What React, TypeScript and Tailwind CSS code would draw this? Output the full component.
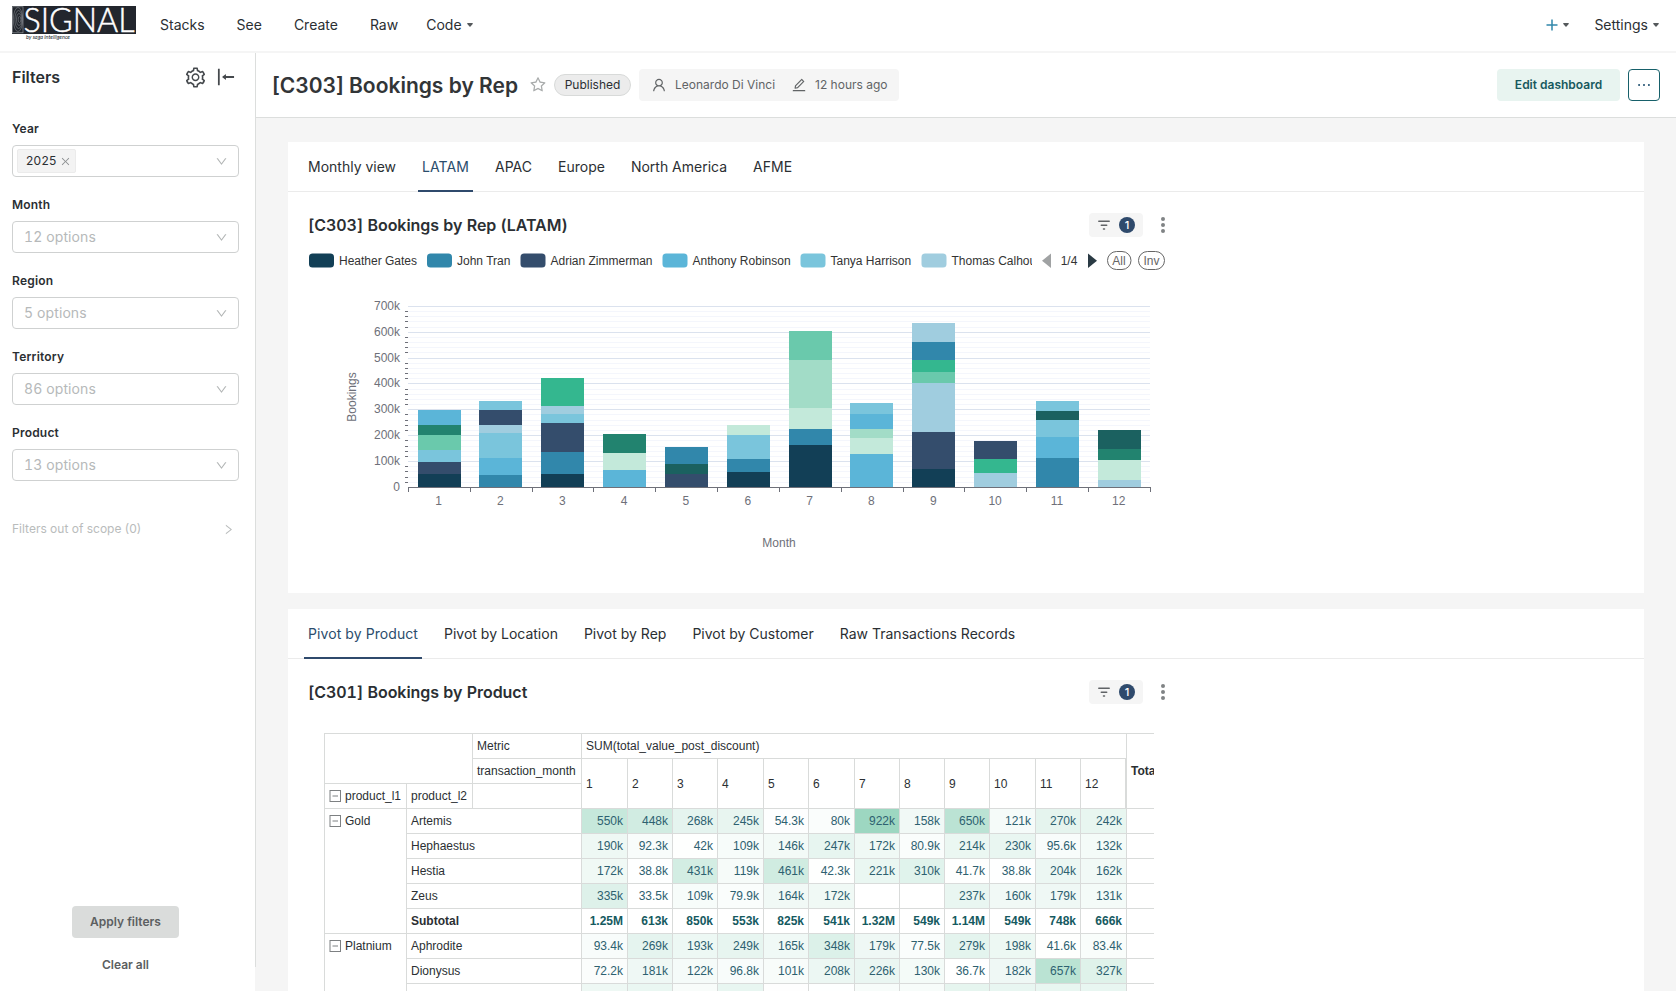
import {
  AiOutlineClose,
  AiOutlineDown,
  AiOutlineEdit,
  AiOutlineEllipsis,
  AiOutlineRight,
  AiOutlineSetting,
  AiOutlineStar,
  AiOutlineUser,
  AiOutlineVerticalAlignTop,
} from "react-icons/ai";

const NAVY = "#123f56";
const TEAL = "#3187ab";
const INDIGO = "#344d6c";
const SKY = "#5bb5d8";
const AQUA = "#7ac5dc";
const ICE = "#a0cddf";
const PINE = "#1b6160";
const FOREST = "#22836f";
const GREEN = "#34b78f";
const JADE = "#6ac9ac";
const MINT = "#a2dcc7";
const PALE = "#c3e9da";

type Segment = [string, number];

// one stack per month, bottom segment first, values in thousands
const stacks: Segment[][] = [
  [[NAVY, 52], [INDIGO, 47], [AQUA, 48], [JADE, 58], [FOREST, 39], [SKY, 58]],
  [[TEAL, 50], [SKY, 66], [AQUA, 95], [ICE, 33], [INDIGO, 56], [AQUA, 34]],
  [[NAVY, 54], [TEAL, 84], [INDIGO, 113], [AQUA, 35], [ICE, 31], [GREEN, 108]],
  [[SKY, 67], [PALE, 68], [FOREST, 71]],
  [[INDIGO, 54], [PINE, 37], [TEAL, 67]],
  [[NAVY, 61], [TEAL, 49], [AQUA, 95], [PALE, 39]],
  [[NAVY, 164], [TEAL, 62], [PALE, 82], [MINT, 184], [JADE, 112]],
  [[SKY, 131], [PALE, 63], [MINT, 34], [SKY, 58], [AQUA, 40]],
  [[NAVY, 71], [INDIGO, 146], [ICE, 186], [JADE, 43], [GREEN, 49], [TEAL, 67], [ICE, 73]],
  [[ICE, 58], [GREEN, 53], [INDIGO, 71]],
  [[TEAL, 115], [SKY, 81], [AQUA, 64], [PINE, 37], [AQUA, 39]],
  [[ICE, 30], [PALE, 77], [FOREST, 44], [PINE, 71]],
];

const legend = [
  { name: "Heather Gates", color: NAVY, x: 309 },
  { name: "John Tran", color: TEAL, x: 427 },
  { name: "Adrian Zimmerman", color: INDIGO, x: 520.5 },
  { name: "Anthony Robinson", color: SKY, x: 662.5 },
  { name: "Tanya Harrison", color: AQUA, x: 800.5 },
  { name: "Thomas Calhoun", color: ICE, x: 921.5 },
];

interface PivotRow {
  name: string;
  values: (number | null)[];
  subtotal?: boolean;
  hideText?: boolean;
}

const pivotRows: PivotRow[] = [
  { name: "Artemis", values: [550, 448, 268, 245, 54.3, 80, 922, 158, 650, 121, 270, 242] },
  { name: "Hephaestus", values: [190, 92.3, 42, 109, 146, 247, 172, 80.9, 214, 230, 95.6, 132] },
  { name: "Hestia", values: [172, 38.8, 431, 119, 461, 42.3, 221, 310, 41.7, 38.8, 204, 162] },
  { name: "Zeus", values: [335, 33.5, 109, 79.9, 164, 172, null, null, 237, 160, 179, 131] },
  { name: "Subtotal", values: [1250, 613, 850, 553, 825, 541, 1320, 549, 1140, 549, 748, 666], subtotal: true },
  { name: "Aphrodite", values: [93.4, 269, 193, 249, 165, 348, 179, 77.5, 279, 198, 41.6, 83.4] },
  { name: "Dionysus", values: [72.2, 181, 122, 96.8, 101, 208, 226, 130, 36.7, 182, 657, 327] },
  { name: "", values: [190, 220, 100, 240, 45, 40, 110, 110, 260, 240, 240, 240], hideText: true },
];

const formatValue = (v: number) => (v >= 1000 ? `${v / 1000}M` : `${v}k`);

// heat colour, white at the smallest value and green at the largest
const heat = (v: number) => {
  const t = Math.max(0, (v - 33) / 889);
  return `rgb(${Math.round(255 - 98 * t)}, ${Math.round(255 - 40 * t)}, ${Math.round(255 - 62 * t)})`;
};

function Caret() {
  return (
    <svg width="6" height="4" viewBox="0 0 6 4" className="shrink-0">
      <path d="M0.8 0h4.4c.6 0 .9.6.5 1L3.500 3.600a.7.7 0 0 1-1 0L.3 1C-.1.600.2 0 .8 0z" fill="#55595c" />
    </svg>
  );
}

function Logo() {
  return (
    <svg width="125" height="36" viewBox="0 0 125 36" className="shrink-0">
      <rect width="124" height="28" fill="#22262d" />
      <rect x="0.500" y="0.800" width="10.500" height="26" fill="none" stroke="#8d9196" strokeWidth="0.700" />
      <g fill="none" stroke="#8d9196" strokeWidth="0.500">
        <ellipse cx="6" cy="13.500" rx="4.700" ry="12" />
        <ellipse cx="6.500" cy="13.500" rx="3.600" ry="9" />
        <ellipse cx="7" cy="13.500" rx="2.500" ry="6" />
        <ellipse cx="7.500" cy="13.500" rx="1.300" ry="3" />
      </g>
      <text
        x="11.500"
        y="26"
        fontFamily="Lato, sans-serif"
        fontSize="33.500"
        fontWeight="300"
        textLength="111"
        lengthAdjust="spacingAndGlyphs"
        fill="#ffffff"
        stroke="#ffffff"
        strokeWidth="0.500"
      >
        SIGNAL
      </text>
      <text x="14" y="32.500" fontFamily="Lato, sans-serif" fontSize="5.500" fontStyle="italic" textLength="44" fill="#22262d">by saga intelligence</text>
    </svg>
  );
}

function TopBar() {
  return (
    <div className="flex h-[53px] items-center border-b-2 border-[#f5f5f5] bg-white pb-0.5 pl-3 text-sm text-[#2b2f33]">
      <div className="-mt-0.5"><Logo /></div>
      <div className="ml-[23px] flex items-center gap-8">
        <span>Stacks</span>
        <span>See</span>
        <span>Create</span>
        <span>Raw</span>
        <span className="flex items-center gap-[5px] -ml-1">Code <Caret /></span>
      </div>
      <div className="ml-auto flex items-center pr-[17px]">
        <svg width="12" height="12" viewBox="0 0 12 12" className="mr-[5px]">
          <path d="M6 0.500v11M0.500 6h11" stroke="#3187ab" strokeWidth="1.500" />
        </svg>
        <Caret />
        <span className="ml-[25px] mr-[5px]">Settings</span>
        <Caret />
      </div>
    </div>
  );
}

const filters = [
  { label: "Year", value: "2025" },
  { label: "Month", placeholder: "12 options" },
  { label: "Region", placeholder: "5 options" },
  { label: "Territory", placeholder: "86 options" },
  { label: "Product", placeholder: "13 options" },
];

function Sidebar() {
  return (
    <div className="-mr-px flex h-[914px] w-64 shrink-0 flex-col border-r border-[#dcdedd] bg-white pl-3 pr-4">
      <div className="flex h-12 items-center">
        <span className="text-base font-semibold text-[#2b2f33]">Filters</span>
        <AiOutlineSetting className="ml-auto h-[23px] w-[23px] text-[#45494d]" />
        <AiOutlineVerticalAlignTop className="ml-[7px] mr-px h-6 w-6 -rotate-90 text-[#45494d]" />
      </div>

      <div className="mt-[18px] flex flex-col gap-[18px]">
        {filters.map((f) => (
          <div key={f.label}>
            <div className="flex h-5 items-center text-xs font-semibold tracking-[0.2px] text-[#2b2f33]">{f.label}</div>
            <div className="mt-1.5 flex h-8 w-[227px] items-center rounded border border-[#cfd1d1] pl-1 pr-[10px]">
              {f.value ? (
                <span className="flex h-6 items-center gap-[3px] rounded-xs border border-[#ebebeb] bg-[#f3f3f3] pl-2 pr-1 text-xs tracking-[0.3px] text-[#2b2f33]">
                  {f.value}
                  <AiOutlineClose className="h-[11px] w-[11px] text-[#8c8f91]" />
                </span>
              ) : (
                <span className="pl-[7px] text-sm tabular-nums tracking-[0.1px] text-[#b6b9ba]">{f.placeholder}</span>
              )}
              <AiOutlineDown className="ml-auto mt-px h-[13px] w-[13px] text-[#b2b5b5]" />
            </div>
          </div>
        ))}
      </div>

      <div className="mt-[38px] flex h-5 items-center text-xs text-[#b9bcbc]">
        <span>Filters out of scope (0)</span>
        <AiOutlineRight className="ml-auto mr-1 h-[13px] w-[13px]" />
      </div>

      <div className="mb-[-8px] mt-auto flex flex-col items-center gap-[17px] text-xs font-semibold text-[#5c5f61]">
        <button className="h-8 w-[107px] rounded bg-[#dadcdb]">Apply filters</button>
        <button className="h-5">Clear all</button>
      </div>
    </div>
  );
}

function DashboardHeader() {
  return (
    <div className="flex h-[65px] items-center border-b border-[#dcdedd] bg-white pl-4 pr-4">
      <h1 className="mt-px text-[21px] font-semibold text-[#323537]">[C303] Bookings by Rep</h1>
      <AiOutlineStar className="ml-[11px] h-[18px] w-[18px] text-[#a9acac]" />
      <span className="ml-[7px] flex h-[22px] w-[77px] items-center justify-center rounded-full border border-[#d8dad9] bg-[#ececec] text-xs text-[#2b2f33]">
        Published
      </span>
      <div className="ml-2 flex h-8 w-[260px] items-center rounded bg-[#f5f5f5] pl-3 text-xs text-[#616466]">
        <AiOutlineUser className="h-4 w-4" />
        <span className="ml-2">Leonardo Di Vinci</span>
        <AiOutlineEdit className="ml-4 h-4 w-4" />
        <span className="ml-2">12 hours ago</span>
      </div>
      <button className="ml-auto h-8 w-[123px] rounded bg-[#e8f4f0] text-xs font-semibold text-[#17595e]">Edit dashboard</button>
      <button className="ml-2 flex h-8 w-8 items-center justify-center rounded border border-[#17606a] text-[#17496a]">
        <AiOutlineEllipsis className="h-[18px] w-[18px]" />
      </button>
    </div>
  );
}

function Tabs({ items, active }: { items: string[]; active: string }) {
  return (
    <div className="flex h-[50px] gap-[18px] border-b border-[#ebebeb] pl-4 text-sm text-[#2b2f33]">
      {items.map((item) => (
        <div
          key={item}
          className={
            item === active
              ? "-mb-px flex items-center border-b-2 border-[#2f4a6c] px-1 pt-[2px] tracking-[0.08px] text-[#2b4d6c]"
              : "flex items-center px-1"
          }
        >
          {item}
        </div>
      ))}
    </div>
  );
}

function ChartTitle({ title }: { title: string }) {
  return (
    <div className="flex h-6 w-[857px] items-center text-[#2b2f33]">
      <h2 className="text-base font-semibold tabular-nums tracking-[-0.03px]">{title}</h2>
      <div className="ml-auto flex h-6 w-[54px] items-center rounded bg-[#f5f5f5] pl-[9px]">
        <svg width="12" height="10" viewBox="0 0 12 10">
          <g stroke="#606366" strokeWidth="1.500" strokeLinecap="round">
            <path d="M0.800 1.300h10.400M3.300 5.200h5.400M5.500 9h1" />
          </g>
        </svg>
        <span className="ml-[9px] flex h-4 w-4 items-center justify-center rounded-full bg-[#2f4a6c] text-[11px] font-medium text-white">1</span>
      </div>
      <svg width="4" height="16" viewBox="0 0 4 16" className="ml-[18px]">
        <g fill="#808385">
          <circle cx="2" cy="2" r="2" />
          <circle cx="2" cy="8" r="2" />
          <circle cx="2" cy="14" r="2" />
        </g>
      </svg>
    </div>
  );
}

const AXIS_Y = 487.5;
const LEFT = 408;
const BAND = 61.83;
const UNIT = 0.2587;

function BookingsChart() {
  const gridLines = Array.from({ length: 36 }, (_, i) => i);

  return (
    <svg
      width="870"
      height="340"
      viewBox="300 245 870 340"
      fontFamily="'Liberation Sans', Arial, sans-serif"
      fontSize="12"
      className="block"
    >
      <clipPath id="legend-clip">
        <rect x="300" y="245" width="732" height="30" />
      </clipPath>
      <g clipPath="url(#legend-clip)">
        {legend.map((l) => (
          <g key={l.name}>
            <rect x={l.x} y="253.500" width="25" height="14" rx="3.500" fill={l.color} />
            <text x={l.x + 30} y="265" fill="#333">{l.name}</text>
          </g>
        ))}
      </g>
      <path d="M1051 253.500v14.500l-9-7.250z" fill="#a0a2a3" />
      <text x="1069" y="265" textAnchor="middle" fill="#333">1/4</text>
      <path d="M1088 253.500v14.500l9-7.250z" fill="#2a3a44" />
      <rect x="1107.500" y="251.500" width="23.500" height="18" rx="9" fill="none" stroke="#666" />
      <text x="1119" y="265" textAnchor="middle" fill="#666">All</text>
      <rect x="1138.500" y="251.500" width="26" height="18" rx="9" fill="none" stroke="#666" />
      <text x="1151.500" y="265" textAnchor="middle" fill="#666">Inv</text>

      {gridLines.map((i) => {
        const y = Math.round(AXIS_Y - i * 20 * UNIT - 0.6) + 0.5;
        const major = i % 5 === 0;
        return (
          <g key={i}>
            <path d={`M${LEFT} ${y}H1150`} stroke={major ? "#dbe2ee" : "#f4f6fc"} />
            {!major && <path d={`M405 ${y}h3`} stroke="#6e7079" />}
            {major && (
              <text x="400" y={y + 3.5} textAnchor="end" fill="#6e7079">
                {i === 0 ? "0" : `${i * 20}k`}
              </text>
            )}
          </g>
        );
      })}

      {stacks.map((stack, month) => {
        let total = 0;
        const x = Math.round(LEFT + month * BAND + 9.6);
        return (
          <g key={month} shapeRendering="crispEdges">
            {stack.map(([color, value], i) => {
              total += value;
              return <rect key={i} x={x} y={AXIS_Y + 0.2 - total * UNIT} width="43" height={value * UNIT} fill={color} />;
            })}
          </g>
        );
      })}

      <path d="M408 487.500h743" stroke="#6e7079" />
      {Array.from({ length: 13 }, (_, i) => (
        <path key={i} d={`M${Math.round(LEFT + i * BAND) + 0.5} 487v5`} stroke="#6e7079" />
      ))}
      {stacks.map((_, i) => (
        <text key={i} x={LEFT + (i + 0.5) * BAND - 0.3} y="505" textAnchor="middle" fill="#6e7079">
          {i + 1}
        </text>
      ))}
      <text x="779" y="547" textAnchor="middle" fill="#6e7079">Month</text>
      <text transform="translate(356 397) rotate(-90)" textAnchor="middle" fill="#6e7079">Bookings</text>
    </svg>
  );
}

function Toggle() {
  return (
    <svg width="12" height="12" viewBox="0 0 12 12" className="mr-1 shrink-0">
      <rect x="1" y="0.500" width="10.500" height="11" fill="none" stroke="#7d8082" />
      <path d="M3.500 6h5.500" stroke="#7d8082" />
    </svg>
  );
}

const cell = "flex items-center border-b border-r border-[#d9dbda] px-1";

function PivotTable() {
  return (
    <div className="w-[830px] overflow-hidden font-['Liberation_Sans',Arial,sans-serif] text-xs text-[#2b2f33]">
      <div className="grid w-[873px] auto-rows-[25px] grid-cols-[82px_66px_109px_46px_45px_45px_46px_45px_46px_45px_45px_45px_46px_45px_46px_70px] border-l border-t border-[#d9dbda]">
        <div className={`${cell} col-span-2 row-span-2`} />
        <div className={cell}>Metric</div>
        <div className={`${cell} col-span-12`}>SUM(total_value_post_discount)</div>
        <div className={`${cell} row-span-3 font-bold`}>Total</div>

        <div className={cell}>transaction_month</div>
        {stacks.map((_, i) => (
          <div
            key={i}
            className={
              i === 11
                ? "row-span-2 flex items-center border-b border-r-2 border-[#d9dbda] px-1"
                : "row-span-2 flex items-center border-b border-r border-[#d9dbda] px-1"
            }
          >
            {i + 1}
          </div>
        ))}
        <div className={cell}><Toggle />product_l1</div>
        <div className={cell}>product_l2</div>
        <div className={cell} />

        <div className="row-span-5 flex items-start border-b border-r border-[#d9dbda] px-1">
          <div className="flex h-6 items-center"><Toggle />Gold</div>
        </div>
        {pivotRows.slice(0, 5).map((row) => <PivotCells key={row.name} row={row} />)}
        <div className="row-span-3 flex items-start border-b border-r border-[#d9dbda] px-1">
          <div className="flex h-6 items-center"><Toggle />Platnium</div>
        </div>
        {pivotRows.slice(5).map((row) => <PivotCells key={row.name} row={row} />)}
      </div>
    </div>
  );
}

function PivotCells({ row }: { row: PivotRow }) {
  return (
    <>
      <div className={row.subtotal ? `${cell} col-span-2 font-bold` : `${cell} col-span-2`}>{row.name}</div>
      {row.values.map((v, i) => (
        <div
          key={i}
          className={row.subtotal ? `${cell} justify-end font-bold text-[#155a5f]` : `${cell} justify-end text-[#2d6170]`}
          style={v !== null && !row.subtotal ? { backgroundColor: heat(v) } : undefined}
        >
          {v !== null && !row.hideText && formatValue(v)}
        </div>
      ))}
      <div className={cell} />
    </>
  );
}

export default function App() {
  return (
    <div className="h-[991px] w-[1676px] overflow-hidden bg-[#f5f5f5] font-[Inter,sans-serif]">
      <TopBar />
      <div className="flex">
        <div className="mr-px h-[938px] w-[255px] shrink-0 bg-white">
          <Sidebar />
        </div>
        <div className="flex min-w-0 flex-1 flex-col">
          <DashboardHeader />
          <div className="flex flex-col gap-4 px-8 pt-6">
            <div className="h-[451px] bg-white">
              <Tabs items={["Monthly view", "LATAM", "APAC", "Europe", "North America", "AFME"]} active="LATAM" />
              <div className="pl-5 pt-[21px]">
                <ChartTitle title="[C303] Bookings by Rep (LATAM)" />
              </div>
              <div className="pl-3 pt-2">
                <BookingsChart />
              </div>
            </div>
            <div className="h-[400px] overflow-hidden bg-white">
              <Tabs
                items={["Pivot by Product", "Pivot by Location", "Pivot by Rep", "Pivot by Customer", "Raw Transactions Records"]}
                active="Pivot by Product"
              />
              <div className="pl-5 pt-[21px]">
                <ChartTitle title="[C301] Bookings by Product" />
              </div>
              <div className="pl-9 pt-[29px]">
                <PivotTable />
              </div>
            </div>
          </div>
        </div>
      </div>
    </div>
  );
}
